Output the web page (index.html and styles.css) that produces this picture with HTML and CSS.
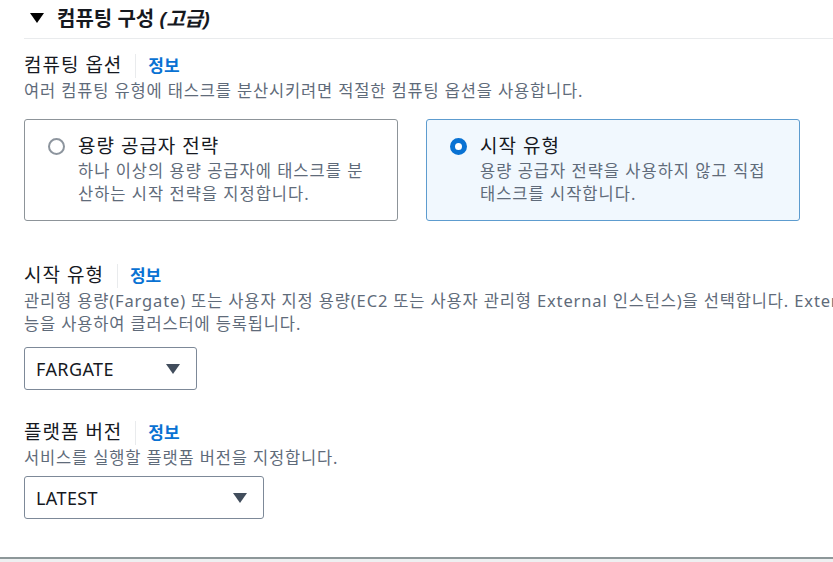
FILE: index.html
```html
<!DOCTYPE html>
<html lang="ko">
<head>
    <meta charset="UTF-8">
    <meta name="viewport" content="width=device-width, initial-scale=1.0">
    <title>컴퓨팅 구성</title>
    <link rel="stylesheet" href="styles.css">
</head>
<body>
    <div class="page">
        <div class="section-header">
            <svg class="caret" width="14" height="10" viewBox="0 0 14 10"><path d="M0 0 L14 0 L7 10 Z" fill="#000"/></svg>
            <h2>컴퓨팅 구성 <em>(고급)</em></h2>
        </div>

        <div class="section-body">
            <div class="field">
                <div class="field-label">
                    <span>컴퓨팅 옵션</span>
                    <a class="info" href="#">정보</a>
                </div>
                <p class="field-desc">여러 컴퓨팅 유형에 태스크를 분산시키려면 적절한 컴퓨팅 옵션을 사용합니다.</p>

                <div class="tiles">
                    <label class="tile">
                        <span class="radio"></span>
                        <span class="tile-text">
                            <span class="tile-title">용량 공급자 전략</span>
                            <span class="tile-desc">하나 이상의 용량 공급자에 태스크를 분산하는 시작 전략을 지정합니다.</span>
                        </span>
                    </label>
                    <label class="tile selected">
                        <span class="radio"></span>
                        <span class="tile-text">
                            <span class="tile-title">시작 유형</span>
                            <span class="tile-desc">용량 공급자 전략을 사용하지 않고 직접 태스크를 시작합니다.</span>
                        </span>
                    </label>
                </div>
            </div>

            <div class="field launch">
                <div class="field-label">
                    <span>시작 유형</span>
                    <a class="info" href="#">정보</a>
                </div>
                <p class="field-desc">관리형 용량(Fargate) 또는 사용자 지정 용량(EC2 또는 사용자 관리형 External 인스턴스)을 선택합니다. External 인스턴스는 ECS Anywhere 기능을 사용하여 클러스터에 등록됩니다.</p>
                <div class="select select-launch">
                    <span>FARGATE</span>
                    <svg width="14" height="10" viewBox="0 0 14 10"><path d="M0 0 L14 0 L7 10 Z" fill="#414d5c"/></svg>
                </div>
            </div>

            <div class="field platform">
                <div class="field-label">
                    <span>플랫폼 버전</span>
                    <a class="info" href="#">정보</a>
                </div>
                <p class="field-desc">서비스를 실행할 플랫폼 버전을 지정합니다.</p>
                <div class="select select-platform">
                    <span>LATEST</span>
                    <svg width="14" height="10" viewBox="0 0 14 10"><path d="M0 0 L14 0 L7 10 Z" fill="#414d5c"/></svg>
                </div>
            </div>
        </div>
    </div>
    <div class="footer"></div>
</body>
</html>
```

FILE: styles.css
```css
/* Base */
html, body {
    margin: 0;
    overflow: hidden;
}

body {
    background: #fff;
    color: #16191f;
    font-family: "Noto Sans", "Noto Sans CJK KR", sans-serif;
    height: 562px;
    display: flex;
    flex-direction: column;
}

.page {
    flex: 1;
    padding-left: 24px;
}

/* Section header */
.section-header {
    display: flex;
    align-items: center;
    height: 34px;
    padding-bottom: 4px;
    border-bottom: 1px solid #e9ebed;
}

.caret {
    margin: 2px 13px 0 6px;
}

.section-header h2 {
    margin: 0;
    font-size: 20px;
    font-weight: 700;
}

.section-header em {
    font-style: italic;
}

/* Fields */
.section-body {
    width: 1085px;
}

.field {
    padding-top: 13px;
}

.field.launch {
    padding-top: 41px;
}

.field.platform {
    padding-top: 29px;
}

.field-label {
    display: flex;
    align-items: center;
    font-size: 19px;
    letter-spacing: 1px;
    line-height: 27px;
}

.info {
    margin-left: 13px;
    padding-left: 12px;
    border-left: 1px solid #e9ebed;
    color: #0972d3;
    font-size: 17px;
    font-weight: 700;
    letter-spacing: 0;
    text-decoration: none;
    line-height: 24px;
}

.field-desc {
    margin: 0;
    font-size: 16.5px;
    letter-spacing: 0.85px;
    line-height: 23px;
    color: #5f6b7a;
}

/* Tiles */
.tiles {
    display: grid;
    grid-template-columns: 374px 374px;
    column-gap: 28px;
    margin-top: 17px;
}

.tile {
    display: flex;
    align-items: flex-start;
    padding: 13px 26px 15px 23px;
    border: 1px solid #8d9499;
    border-radius: 3px;
    height: 72px;
}

.tile.selected {
    border-color: #5d9ccf;
    background: #f1f8fe;
}

.radio {
    flex: none;
    box-sizing: border-box;
    width: 17px;
    height: 17px;
    margin-top: 5px;
    border: 2px solid #8d959e;
    border-radius: 50%;
    background: #fff;
}

.tile.selected .radio {
    border: 5px solid #0972d3;
}

.tile-text {
    margin-left: 13px;
}

.tile-title {
    display: block;
    font-size: 19px;
    letter-spacing: 1px;
    line-height: 26px;
}

.tile-desc {
    display: block;
    font-size: 16.5px;
    letter-spacing: 1px;
    line-height: 23px;
    color: #5f6b7a;
}

/* Selects */
.select {
    display: flex;
    align-items: center;
    justify-content: space-between;
    box-sizing: border-box;
    height: 43px;
    margin-top: 12px;
    padding: 0 16px 0 11px;
    border: 1px solid #7d8998;
    border-radius: 3px;
    font-size: 18px;
    letter-spacing: 0.4px;
}

.select-launch {
    width: 173px;
}

.select-platform {
    width: 240px;
    margin-top: 7px;
}

/* Bottom */
.footer {
    height: 3px;
    border-top: 2px solid #8d9799;
    background: #eef0f1;
}
```
